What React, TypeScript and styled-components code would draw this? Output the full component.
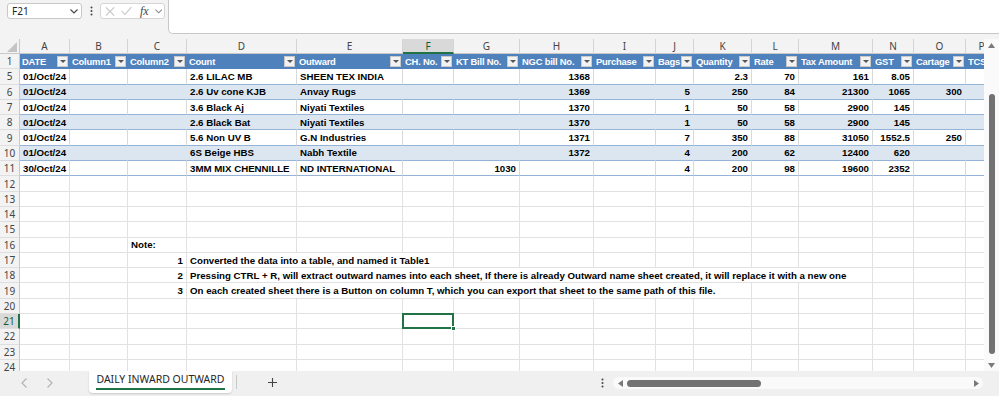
import React from 'react'
import styled, { createGlobalStyle } from 'styled-components'

const GREEN = '#217346'
const CHROME = '#f3f3f3'
const GRID = '#e1e1e1'
const TABLE_BLUE = '#4f81bd'
const BAND = '#dce6f1'
const BAND_LINE = '#95b3d7'
const UI_FONT = `'Noto Sans', 'Open Sans', sans-serif`
const CELL_FONT = `'Liberation Sans', Arial, sans-serif`

const GlobalStyle = createGlobalStyle`
  html, body {
    margin: 0;
    padding: 0;
    overflow: hidden;
    background: ${CHROME};
  }
  body {
    font-family: ${CELL_FONT};
  }
`

type Value = string | number
type RowKind = 'head' | 'band' | 'plain' | 'sheet'

interface SheetRow {
  n: number
  kind: RowKind
  cells: Partial<Record<string, Value>>
}

const COLUMNS = [
  { id: 'A', w: 50 },
  { id: 'B', w: 58 },
  { id: 'C', w: 59 },
  { id: 'D', w: 110 },
  { id: 'E', w: 106 },
  { id: 'F', w: 51 },
  { id: 'G', w: 66 },
  { id: 'H', w: 74 },
  { id: 'I', w: 62 },
  { id: 'J', w: 38 },
  { id: 'K', w: 58 },
  { id: 'L', w: 47 },
  { id: 'M', w: 74 },
  { id: 'N', w: 41 },
  { id: 'O', w: 52 },
  { id: 'P', w: 32 },
]

const ACTIVE_COL = 'F'
const ACTIVE_ROW = 21

const ROWS: SheetRow[] = [
  {
    n: 1,
    kind: 'head',
    cells: {
      A: 'DATE', B: 'Column1', C: 'Column2', D: 'Count', E: 'Outward', F: 'CH. No.',
      G: 'KT Bill No.', H: 'NGC bill No.', I: 'Purchase', J: 'Bags', K: 'Quantity',
      L: 'Rate', M: 'Tax Amount', N: 'GST', O: 'Cartage', P: 'TCS',
    },
  },
  { n: 5, kind: 'plain', cells: { A: '01/Oct/24', D: '2.6 LILAC MB', E: 'SHEEN TEX INDIA', H: 1368, K: 2.3, L: 70, M: 161, N: 8.05 } },
  { n: 6, kind: 'band', cells: { A: '01/Oct/24', D: '2.6 Uv cone KJB', E: 'Anvay Rugs', H: 1369, J: 5, K: 250, L: 84, M: 21300, N: 1065, O: 300 } },
  { n: 7, kind: 'plain', cells: { A: '01/Oct/24', D: '3.6 Black Aj', E: 'Niyati Textiles', H: 1370, J: 1, K: 50, L: 58, M: 2900, N: 145 } },
  { n: 8, kind: 'band', cells: { A: '01/Oct/24', D: '2.6 Black Bat', E: 'Niyati Textiles', H: 1370, J: 1, K: 50, L: 58, M: 2900, N: 145 } },
  { n: 9, kind: 'plain', cells: { A: '01/Oct/24', D: '5.6 Non UV B', E: 'G.N Industries', H: 1371, J: 7, K: 350, L: 88, M: 31050, N: 1552.5, O: 250 } },
  { n: 10, kind: 'band', cells: { A: '01/Oct/24', D: '6S Beige HBS', E: 'Nabh Textile', H: 1372, J: 4, K: 200, L: 62, M: 12400, N: 620 } },
  { n: 11, kind: 'plain', cells: { A: '30/Oct/24', D: '3MM MIX CHENNILLE', E: 'ND INTERNATIONAL', G: 1030, J: 4, K: 200, L: 98, M: 19600, N: 2352 } },
  { n: 12, kind: 'sheet', cells: {} },
  { n: 13, kind: 'sheet', cells: {} },
  { n: 14, kind: 'sheet', cells: {} },
  { n: 15, kind: 'sheet', cells: {} },
  { n: 16, kind: 'sheet', cells: { C: 'Note:' } },
  { n: 17, kind: 'sheet', cells: { C: 1, D: 'Converted the data into a table, and named it Table1' } },
  {
    n: 18,
    kind: 'sheet',
    cells: {
      C: 2,
      D: 'Pressing CTRL + R, will extract outward names into each sheet, If there is already Outward name sheet created, it will replace it with a new one',
    },
  },
  {
    n: 19,
    kind: 'sheet',
    cells: { C: 3, D: 'On each created sheet there is a Button on column T, which you can export that sheet to the same path of this file.' },
  },
  { n: 20, kind: 'sheet', cells: {} },
  { n: 21, kind: 'sheet', cells: {} },
  { n: 22, kind: 'sheet', cells: {} },
  { n: 23, kind: 'sheet', cells: {} },
  { n: 24, kind: 'sheet', cells: {} },
]

const rowBg = (kind: RowKind) =>
  kind === 'head' ? TABLE_BLUE : kind === 'band' ? BAND : '#ffffff'

const vLine = (kind: RowKind) =>
  kind === 'head' ? TABLE_BLUE : kind === 'band' ? BAND : kind === 'plain' ? '#d9d9d9' : GRID

const hLine = (kind: RowKind) =>
  kind === 'head' ? TABLE_BLUE : kind === 'sheet' ? GRID : BAND_LINE

/* ---------- frame ---------- */

const Frame = styled.div`
  width: 999px;
  height: 396px;
  display: flex;
  flex-direction: column;
  background: ${CHROME};
  overflow: hidden;
`

/* ---------- formula bar ---------- */

const FormulaBar = styled.div`
  height: 39px;
  flex: none;
  display: flex;
  align-items: flex-start;
  padding-left: 7px;
  box-sizing: border-box;
`

const NameBox = styled.div`
  margin-top: 3px;
  width: 75px;
  height: 16px;
  box-sizing: border-box;
  border: 1px solid #c8c8c8;
  border-radius: 3px;
  background: #fff;
  display: flex;
  align-items: center;
  justify-content: space-between;
  padding: 0 3px 0 4px;
  font: 10px ${UI_FONT};
  color: #222;
`

const Kebab = styled.div`
  width: 18px;
  height: 16px;
  margin-top: 3px;
  display: flex;
  align-items: center;
  justify-content: center;
`

const FnBox = styled.div`
  margin-top: 3px;
  width: 65px;
  height: 16px;
  box-sizing: border-box;
  border: 1px solid #d6d6d6;
  border-radius: 3px;
  background: #fff;
  display: flex;
  align-items: center;
  padding: 0 2px 0 4px;
  gap: 6px;
`

const FxLabel = styled.span`
  font: italic 12px 'Liberation Serif', 'Times New Roman', serif;
  color: #444;
  margin-left: 2px;
  line-height: 1;
`

const FormulaInput = styled.div`
  margin-left: 3px;
  flex: 1;
  height: 33px;
  background: #fff;
  border: 1px solid #c8c8c8;
  border-top: none;
  border-right: none;
  border-bottom-left-radius: 5px;
`

/* ---------- sheet ---------- */

const SheetArea = styled.div`
  flex: 1;
  display: flex;
  min-height: 0;
`

const Grid = styled.div`
  width: 984px;
  flex: none;
  overflow: hidden;
  display: flex;
  flex-direction: column;
  background: #fff;
`

const ColHeaderRow = styled.div`
  height: 15px;
  flex: none;
  display: flex;
  background: ${CHROME};
`

const Corner = styled.div`
  width: 20px;
  flex: none;
  box-sizing: border-box;
  border-right: 1px solid #c8c8c8;
  border-bottom: 1px solid #c8c8c8;
  display: flex;
  align-items: flex-end;
  justify-content: flex-end;
  padding: 0 2px 1px 0;
`

const ColLetter = styled.div<{ $w: number; $active?: boolean }>`
  width: ${p => p.$w}px;
  flex: none;
  box-sizing: border-box;
  display: flex;
  align-items: center;
  justify-content: center;
  font: 10px ${UI_FONT};
  color: ${p => (p.$active ? '#0e5c2f' : '#444')};
  background: ${p => (p.$active ? '#d9d9d9' : CHROME)};
  border-right: 1px solid #d4d4d4;
  border-bottom: ${p => (p.$active ? `2px solid ${GREEN}` : '1px solid #c8c8c8')};
`

const Row = styled.div<{ $kind: RowKind }>`
  height: 15.3px;
  flex: none;
  display: flex;
  background: ${p => rowBg(p.$kind)};
`

const RowNum = styled.div<{ $active?: boolean }>`
  width: 20px;
  flex: none;
  box-sizing: border-box;
  display: flex;
  align-items: center;
  justify-content: center;
  font: 10px ${UI_FONT};
  color: ${p => (p.$active ? '#0e5c2f' : '#444')};
  background: ${p => (p.$active ? '#d9d9d9' : CHROME)};
  border-bottom: 1px solid #dedede;
  border-right: ${p => (p.$active ? `2px solid ${GREEN}` : '1px solid #c8c8c8')};
`

const Cell = styled.div<{ $w: number; $kind: RowKind; $num?: boolean; $selected?: boolean }>`
  width: ${p => p.$w}px;
  flex: none;
  box-sizing: border-box;
  position: relative;
  display: flex;
  align-items: center;
  justify-content: ${p => (p.$num ? 'flex-end' : 'flex-start')};
  padding: ${p => (p.$kind === 'head' ? '0 1px 0 2px' : '0 3px')};
  white-space: nowrap;
  font-size: 9.7px;
  font-weight: 700;
  color: ${p => (p.$kind === 'head' ? '#fff' : '#000')};
  border-right: 1px solid ${p => vLine(p.$kind)};
  border-bottom: 1px solid ${p => hLine(p.$kind)};

  ${p =>
    p.$selected
      ? `
    &::after {
      content: '';
      position: absolute;
      left: -1px;
      top: -1px;
      right: -1px;
      bottom: -1px;
      border: 2px solid ${GREEN};
      z-index: 2;
    }
    &::before {
      content: '';
      position: absolute;
      right: -3px;
      bottom: -3px;
      width: 5px;
      height: 5px;
      background: ${GREEN};
      border: 1px solid #fff;
      box-sizing: border-box;
      z-index: 3;
    }
  `
      : ''}
`

const HeadLabel = styled.span`
  flex: 1;
  min-width: 0;
  overflow: hidden;
  font-size: 9.4px;
  letter-spacing: -0.2px;
`

const FilterButton = styled.span`
  flex: none;
  width: 11px;
  height: 11px;
  box-sizing: border-box;
  background: #f2f2f2;
  border: 1px solid #c9c9c9;
  display: flex;
  align-items: center;
  justify-content: center;

  &::after {
    content: '';
    border-left: 3px solid transparent;
    border-right: 3px solid transparent;
    border-top: 3px solid #555;
  }
`

const OverflowText = styled.span`
  align-self: stretch;
  display: flex;
  align-items: center;
  position: relative;
  z-index: 1;
  background: #fff;
  padding-right: 2px;
`

const VScroll = styled.div`
  width: 15px;
  flex: none;
  display: flex;
  flex-direction: column;
  align-items: center;
  background: #fafafa;
`

const VThumb = styled.div`
  margin-top: 46px;
  width: 6px;
  height: 260px;
  border-radius: 3px;
  background: #727272;
`

const Spacer = styled.div`
  flex: 1;
`

/* ---------- bottom tab bar ---------- */

const TabBar = styled.div`
  height: 25px;
  flex: none;
  display: flex;
  align-items: flex-start;
  background: #f0f0f0;
  font-family: ${UI_FONT};
`

const NavArrows = styled.div`
  width: 89px;
  height: 24px;
  flex: none;
  box-sizing: border-box;
  display: flex;
  align-items: center;
  padding-left: 21px;
  gap: 20px;
`

const SheetTab = styled.div`
  width: 143px;
  height: 22px;
  flex: none;
  background: #fff;
  border-radius: 0 0 4px 4px;
  box-shadow: 0 1px 2px rgba(0, 0, 0, 0.16);
  display: flex;
  align-items: flex-end;
  justify-content: center;
`

const TabLabel = styled.span`
  font-size: 10.5px;
  color: #262626;
  line-height: 13px;
  padding-bottom: 2px;
  margin-bottom: 3px;
  border-bottom: 2px solid ${GREEN};
`

const TabDivider = styled.div`
  width: 1px;
  height: 14px;
  margin: 4px 0 0 4px;
  background: #c8c8c8;
  flex: none;
`

const AddSheet = styled.div`
  margin: 7px 0 0 31px;
  width: 9px;
  height: 9px;
  flex: none;
  display: flex;
`

const BarKebab = styled.div`
  margin: 7px 0 0 324px;
  width: 4px;
  height: 10px;
  flex: none;
  display: flex;
`

const HScroll = styled.div`
  margin: 6px 0 0 8px;
  width: 370px;
  height: 12px;
  flex: none;
  box-sizing: border-box;
  border-radius: 6px;
  background: #fafafa;
  display: flex;
  align-items: center;
  padding: 0 4px 0 5px;
`

const HThumb = styled.div`
  margin-left: 4px;
  width: 134px;
  height: 7px;
  border-radius: 4px;
  background: #727272;
`

/* ---------- icons ---------- */

const Chevron: React.VFC<{ color?: string }> = ({ color = '#444' }) => (
  <svg width="8" height="5" viewBox="0 0 8 5">
    <path d="M0.5 0.5 L4 4 L7.5 0.5" fill="none" stroke={color} strokeWidth="1.1" />
  </svg>
)

const Dots: React.VFC<{ h?: number }> = ({ h = 10 }) => (
  <svg width="3" height={h} viewBox={`0 0 3 ${h}`}>
    <circle cx="1.5" cy="1.5" r="1" fill="#444" />
    <circle cx="1.5" cy={h / 2} r="1" fill="#444" />
    <circle cx="1.5" cy={h - 1.5} r="1" fill="#444" />
  </svg>
)

const Triangle: React.VFC<{ dir: 'up' | 'down' | 'left' | 'right' }> = ({ dir }) => {
  const pts = {
    up: '0,5 3.5,0 7,5',
    down: '0,0 7,0 3.5,5',
    left: '5,0 5,7 0,3.5',
    right: '0,0 0,7 5,3.5',
  }[dir]
  const vertical = dir === 'up' || dir === 'down'
  return (
    <svg width={vertical ? 7 : 5} height={vertical ? 5 : 7} viewBox={vertical ? '0 0 7 5' : '0 0 5 7'}>
      <polygon points={pts} fill="#7a7a7a" />
    </svg>
  )
}

const renderCell = (row: SheetRow, colId: string) => {
  const value = row.cells[colId]
  if (row.kind === 'head') {
    return (
      <>
        <HeadLabel>{value}</HeadLabel>
        <FilterButton />
      </>
    )
  }
  if (value === undefined) return null
  if (row.kind === 'sheet' && typeof value === 'string') return <OverflowText>{value}</OverflowText>
  return value
}

const App: React.VFC = () => (
  <>
    <GlobalStyle />
    <Frame>
      <FormulaBar>
        <NameBox>
          <span>F21</span>
          <Chevron />
        </NameBox>
        <Kebab>
          <Dots />
        </Kebab>
        <FnBox>
          <svg width="11" height="11" viewBox="0 0 11 11">
            <path d="M1 1 L10 10 M10 1 L1 10" stroke="#c2c2c2" strokeWidth="1.1" />
          </svg>
          <svg width="12" height="10" viewBox="0 0 12 10">
            <path d="M0.8 5 L4.3 8.8 L11.3 0.8" fill="none" stroke="#c2c2c2" strokeWidth="1.1" />
          </svg>
          <FxLabel>fx</FxLabel>
          <Chevron color="#888" />
        </FnBox>
        <FormulaInput />
      </FormulaBar>

      <SheetArea>
        <Grid>
          <ColHeaderRow>
            <Corner>
              <svg width="10" height="10" viewBox="0 0 10 10">
                <polygon points="10,0 10,10 0,10" fill="#c4c4c4" />
              </svg>
            </Corner>
            {COLUMNS.map(c => (
              <ColLetter key={c.id} $w={c.w} $active={c.id === ACTIVE_COL}>
                {c.id}
              </ColLetter>
            ))}
          </ColHeaderRow>

          {ROWS.map(row => (
            <Row key={row.n} $kind={row.kind}>
              <RowNum $active={row.n === ACTIVE_ROW}>{row.n}</RowNum>
              {COLUMNS.map(c => (
                <Cell
                  key={c.id}
                  $w={c.w}
                  $kind={row.kind}
                  $num={typeof row.cells[c.id] === 'number'}
                  $selected={row.n === ACTIVE_ROW && c.id === ACTIVE_COL}
                >
                  {renderCell(row, c.id)}
                </Cell>
              ))}
            </Row>
          ))}
        </Grid>

        <VScroll>
          <div style={{ marginTop: 4, display: 'flex' }}>
            <Triangle dir="up" />
          </div>
          <VThumb />
          <Spacer />
          <div style={{ marginBottom: 3, display: 'flex' }}>
            <Triangle dir="down" />
          </div>
        </VScroll>
      </SheetArea>

      <TabBar>
        <NavArrows>
          <svg width="6" height="10" viewBox="0 0 6 10">
            <path d="M5.5 0.5 L1 5 L5.5 9.5" fill="none" stroke="#b0b0b0" strokeWidth="1.1" />
          </svg>
          <svg width="6" height="10" viewBox="0 0 6 10">
            <path d="M0.5 0.5 L5 5 L0.5 9.5" fill="none" stroke="#b0b0b0" strokeWidth="1.1" />
          </svg>
        </NavArrows>
        <SheetTab>
          <TabLabel>DAILY INWARD OUTWARD</TabLabel>
        </SheetTab>
        <TabDivider />
        <AddSheet>
          <svg width="9" height="9" viewBox="0 0 9 9">
            <path d="M4.5 0 V9 M0 4.5 H9" stroke="#444" strokeWidth="1.1" />
          </svg>
        </AddSheet>
        <BarKebab>
          <Dots h={10} />
        </BarKebab>
        <HScroll>
          <Triangle dir="left" />
          <HThumb />
          <Spacer />
          <Triangle dir="right" />
        </HScroll>
      </TabBar>
    </Frame>
  </>
)

export default App
